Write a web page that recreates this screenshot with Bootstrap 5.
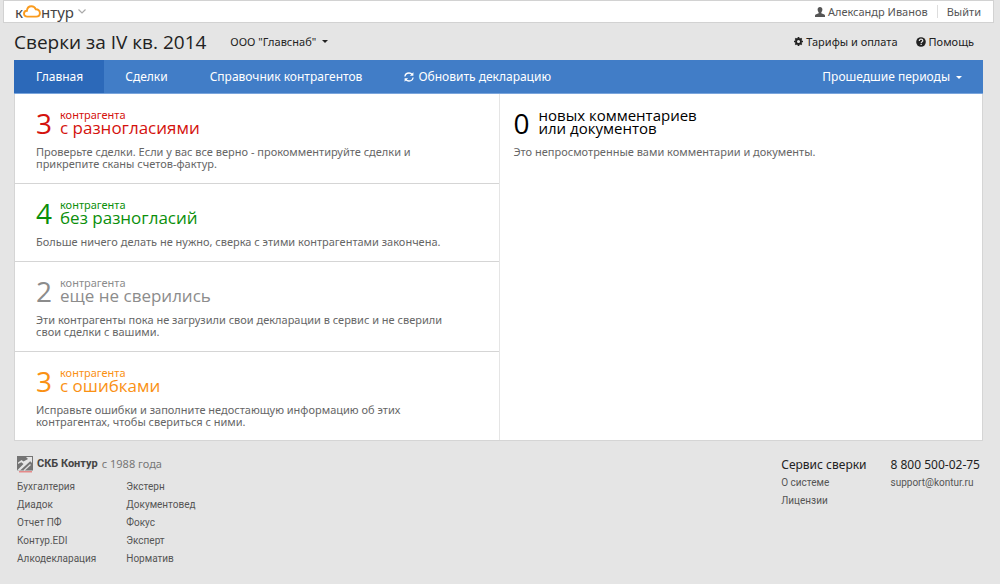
<!DOCTYPE html>
<html lang="ru">
<head>
<meta charset="utf-8">
<meta name="viewport" content="width=device-width, initial-scale=1">
<title>Контур.Сверка</title>
<link href="https://cdn.jsdelivr.net/npm/bootstrap@5.3.0/dist/css/bootstrap.min.css" rel="stylesheet">
<style>
  body { background: #e5e5e5; color: #222; font-family: "Noto Sans", "Open Sans", sans-serif; font-size: 11px; line-height: 16px; }
  a { color: inherit; text-decoration: none; }
  a:hover { text-decoration: underline; }
  svg { display: block; flex: none; }
  .plain-btn { background: none; border: 0; padding: 0; color: inherit; display: flex; align-items: center; }
  .icon-text { display: flex; align-items: center; gap: 3px; }
  .caret { border: 3px solid transparent; border-top-color: currentColor; border-bottom: 0; margin-left: 6px; }
  .service-bar { background: #fff; border: 1px solid #d2d2d2; height: 23px; margin: 0 6px 0 3px; padding: 0 12px 0 11px; color: #555; }
  .brand-name { font-size: 15px; line-height: 20px; color: #444; }
  .brand-name:hover { text-decoration: none; }
  .exit-link { border-left: 1px solid #ddd; padding-left: 9px; margin-left: 9px; line-height: 13px; }
  .page-wrap { margin: 0 17px 0 14px; }
  .title-row { height: 37px; padding-right: 9px; }
  .title-row h1 { font-family: "Open Sans", sans-serif; font-size: 19px; line-height: 26px; font-weight: 400; }
  .title-links { gap: 18px; }
  .main-nav { background: #417dc7; border-bottom: 1px solid #7aa5dc; color: #fff; font-size: 12px; height: 34px; padding-right: 21px; }
  .main-nav .nav-item-link { display: flex; align-items: center; gap: 4px; padding: 1px 21px 0; }
  .main-nav .plain-btn { padding-top: 1px; }
  .main-nav .current { background: #2c69b9; padding: 1px 21px 0 22px; }
  .panel { background: #fff; border: 1px solid #d5d5d5; border-top: 0; }
  .stat { padding: 15px 30px 13px 21px; border-bottom: 1px solid #d5d5d5; }
  .stat:last-child { border-bottom: 0; padding-bottom: 12px; }
  .stat p { color: #666; line-height: 12px; margin: 12px 0 0; }
  .stat-head { display: flex; align-items: center; height: 25px; }
  .stat-head:hover { text-decoration: none; }
  .stat-num { font-family: "Open Sans", sans-serif; font-size: 28px; line-height: 24px; width: 24px; padding-top: 3px; }
  .stat-top { display: block; line-height: 12px; }
  .stat-big { display: block; font-family: "Open Sans", sans-serif; font-size: 17px; line-height: 13px; }
  .red { color: #d4120d; } .green { color: #0b8f0b; } .grey { color: #8c8c8c; } .orange { color: #fa9114; }
  .col-news { border-left: 1px solid #e5e5e5; color: #000; }
  .col-news .stat { padding-left: 14px; }
  .col-news .stat-num { width: 25px; }
  .col-news .stat-big { font-size: 15px; }
  .page-foot { padding: 13px 3px 0; color: #555; font-family: Roboto, "Open Sans", sans-serif; font-size: 10px; line-height: 18px; }
  .page-foot ul { list-style: none; margin: 0; padding: 0; }
  .foot-brand { height: 20px; gap: 4px; margin-bottom: 4px; font-size: 11px; color: #777; }
  .foot-brand strong { color: #444; }
  .foot-brand span { font-family: "Noto Sans", sans-serif; }
  .foot-products { column-gap: 30px; }
  .foot-service { gap: 24px; padding-top: 2px; }
  .page-foot .foot-lead { font-family: "Noto Sans", sans-serif; font-size: 12px; color: #222; }
</style>
</head>
<body>
<header class="service-bar d-flex align-items-center justify-content-between">
  <a href="#" class="brand-name d-flex align-items-center" aria-label="Контур">к<svg width="18" height="13" viewBox="0 0 18 13"><path d="M4.200 11.600C2.200 11.600 1 10.300 1 8.700c0-1.700 1.200-2.800 2.900-2.900C4.200 3 6 1.200 8.400 1.200c2 0 3.600 1.100 4.300 3 2.400-.1 4.200 1.500 4.200 3.700s-1.600 3.700-3.700 3.700z" fill="none" stroke="#fa9b1e" stroke-width="1.900"/></svg>нтур<svg class="ms-1" width="8" height="5" viewBox="0 0 8 5"><path d="M.5.5 4 4 7.500.5" fill="none" stroke="#aaa" stroke-width="1.200"/></svg></a>
  <div class="d-flex align-items-center">
    <a href="#" class="icon-text"><svg width="10" height="10" viewBox="0 0 10 10" fill="#555"><path d="M5 0c1.500 0 2.400 1 2.400 2.600 0 1.200-.5 2.200-1.100 2.800v.8L9.300 7.500c.5.300.7.700.7 1.300V10H0V8.800c0-.6.200-1 .7-1.300l3-1.300v-.8C3.100 4.800 2.600 3.800 2.600 2.600 2.600 1 3.500 0 5 0z"/></svg>Александр Иванов</a>
    <a href="#" class="exit-link">Выйти</a>
  </div>
</header>
<div class="page-wrap">
  <div class="title-row d-flex align-items-center">
    <h1 class="m-0">Сверки за IV кв. 2014</h1>
    <button type="button" class="plain-btn ms-4">ООО "Главснаб"<span class="caret"></span></button>
    <div class="title-links d-flex ms-auto">
      <a href="#" class="icon-text"><svg width="9" height="9" viewBox="0 0 9 9"><circle cx="4.500" cy="4.500" r="2.500" fill="none" stroke="#222" stroke-width="1.900"/><path d="M4.500 0v1.500M4.500 7.500V9M0 4.500h1.500M7.500 4.500H9M1.300 1.300l1 1M6.700 6.700l1 1M1.300 7.700l1-1M6.700 2.300l1-1" stroke="#222" stroke-width="1.700"/></svg>Тарифы и оплата</a>
      <a href="#" class="icon-text"><svg width="10" height="10" viewBox="0 0 10 10"><circle cx="5" cy="5" r="4.800" fill="#222"/><path d="M3.300 3.900C3.300 2.700 4 2.200 5 2.200s1.800.6 1.800 1.500C6.800 4.800 5.200 4.700 5.200 6" fill="none" stroke="#e5e5e5" stroke-width="1.200"/><path d="M4.500 6.800h1.300V8H4.500z" fill="#e5e5e5"/></svg>Помощь</a>
    </div>
  </div>
  <nav class="main-nav d-flex">
    <a href="#" class="nav-item-link current" aria-current="page">Главная</a>
    <a href="#" class="nav-item-link">Сделки</a>
    <a href="#" class="nav-item-link">Справочник контрагентов</a>
    <a href="#" class="nav-item-link"><svg width="10" height="10" viewBox="0 0 10 10" fill="none" stroke="#fff" stroke-width="1.300"><path d="M.9 4.500C1.200 2.300 2.900 1 5 1c1.300 0 2.400.5 3.200 1.500M9.100 5.500C8.800 7.700 7.100 9 5 9c-1.300 0-2.400-.5-3.200-1.500"/><path d="M9.400.3v3.500H5.900zM.6 9.700V6.200h3.500z" fill="#fff" stroke="none"/></svg>Обновить декларацию</a>
    <button type="button" class="plain-btn ms-auto">Прошедшие периоды<span class="caret"></span></button>
  </nav>
  <main class="panel row g-0">
    <div class="col-6">
      <section class="stat"><a href="#" class="stat-head red"><span class="stat-num">3</span><span><span class="stat-top">контрагента</span><span class="stat-big">с разногласиями</span></span></a>
        <p>Проверьте сделки. Если у вас все верно - прокомментируйте сделки и прикрепите сканы счетов-фактур.</p></section>
      <section class="stat"><a href="#" class="stat-head green"><span class="stat-num">4</span><span><span class="stat-top">контрагента</span><span class="stat-big">без разногласий</span></span></a>
        <p>Больше ничего делать не нужно, сверка с этими контрагентами закончена.</p></section>
      <section class="stat"><a href="#" class="stat-head grey"><span class="stat-num">2</span><span><span class="stat-top">контрагента</span><span class="stat-big">еще не сверились</span></span></a>
        <p>Эти контрагенты пока не загрузили свои декларации в сервис и не сверили<br>свои сделки с вашими.</p></section>
      <section class="stat"><a href="#" class="stat-head orange"><span class="stat-num">3</span><span><span class="stat-top">контрагента</span><span class="stat-big">с ошибками</span></span></a>
        <p>Исправьте ошибки и заполните недостающую информацию об этих<br>контрагентах, чтобы свериться с ними.</p></section>
    </div>
    <div class="col-6 col-news">
      <section class="stat"><a href="#" class="stat-head"><span class="stat-num">0</span><span class="stat-big">новых комментариев<br>или документов</span></a>
        <p>Это непросмотренные вами комментарии и документы.</p></section>
    </div>
  </main>
  <footer class="page-foot d-flex justify-content-between align-items-start">
    <div>
      <div class="foot-brand d-flex align-items-center">
        <svg width="16" height="18" viewBox="0 0 16 18"><path d="M0 1h16v14.500H0z" fill="#747474"/><path d="M1 7.500 4.500 5l2 1.500L11 4 9 2h6v6l-1.800-1.700L3 15.500H0L6.500 9 4.300 7.300 1 9z" fill="#e5e5e5"/><path d="M7 15.500 13.500 9.500" fill="none" stroke="#e0e0e0" stroke-width="1.200"/><path d="M2 16h13v1.500H2z" fill="#e58a8a"/></svg>
        <strong>СКБ Контур</strong><span>с 1988 года</span>
      </div>
      <div class="foot-products d-flex">
        <ul>
          <li><a href="#">Бухгалтерия</a></li><li><a href="#">Диадок</a></li><li><a href="#">Отчет ПФ</a></li><li><a href="#">Контур.EDI</a></li><li><a href="#">Алкодекларация</a></li>
        </ul>
        <ul>
          <li><a href="#">Экстерн</a></li><li><a href="#">Документовед</a></li><li><a href="#">Фокус</a></li><li><a href="#">Эксперт</a></li><li><a href="#">Норматив</a></li>
        </ul>
      </div>
    </div>
    <div class="foot-service d-flex">
      <ul>
        <li class="foot-lead">Сервис сверки</li><li><a href="#">О системе</a></li><li><a href="#">Лицензии</a></li>
      </ul>
      <ul>
        <li class="foot-lead">8 800 500-02-75</li><li><a href="#">support@kontur.ru</a></li>
      </ul>
    </div>
  </footer>
</div>
<script src="https://cdn.jsdelivr.net/npm/bootstrap@5.3.0/dist/js/bootstrap.bundle.min.js"></script>
</body>
</html>
